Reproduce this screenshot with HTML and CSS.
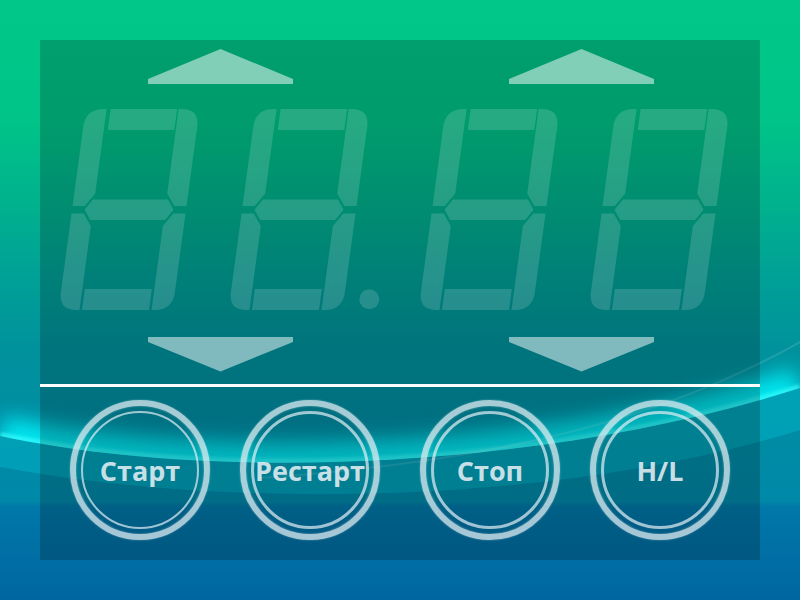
FILE: index.html
```html
<!DOCTYPE html>
<html lang="ru">
<head>
<meta charset="utf-8">
<title>Таймер</title>
<link rel="stylesheet" href="styles.css">
</head>
<body>
<main class="panel">
  <section class="display">
    <div class="arrows arrows-up">
      <span class="arrow up"></span>
      <span class="arrow up"></span>
    </div>
    <svg class="digits" viewBox="0 0 720 220" xmlns="http://www.w3.org/2000/svg">
      <defs>
        <g id="digit">
          <path d="M25,0H91.5V21H25Z"/>
          <path d="M114,97V18Q114,0 96,0H93V84.5L101.8,97Z"/>
          <path d="M114,104.5H101.8L93,117V201H96Q114,201 114,183Z"/>
          <path d="M23.5,180H90.5V201H23.5Z"/>
          <path d="M0,104.5H12.2L21,117V201H18Q0,201 0,183Z"/>
          <path d="M0,97V18Q0,0 18,0H21V84.5L12.2,97Z"/>
          <path d="M12.5,100.75L19.5,90.5H94.5L101.5,100.75L94.5,111H19.5Z"/>
        </g>
      </defs>
      <g class="segments">
        <use href="#digit" transform="translate(18.5 9) matrix(1 0 -0.135 1 27.135 0)"/>
        <use href="#digit" transform="translate(188.5 9) matrix(1 0 -0.135 1 27.135 0)"/>
        <circle cx="329.3" cy="199.3" r="10"/>
        <use href="#digit" transform="translate(378.5 9) matrix(1 0 -0.135 1 27.135 0)"/>
        <use href="#digit" transform="translate(548.5 9) matrix(1 0 -0.135 1 27.135 0)"/>
      </g>
    </svg>
    <div class="arrows arrows-down">
      <span class="arrow down"></span>
      <span class="arrow down"></span>
    </div>
  </section>
  <hr class="divider">
  <section class="controls">
    <div class="pair">
      <button class="btn"><span class="ring ring-thin">Старт</span></button>
      <button class="btn"><span class="ring">Рестарт</span></button>
    </div>
    <div class="pair">
      <button class="btn"><span class="ring">Стоп</span></button>
      <button class="btn"><span class="ring">H/L</span></button>
    </div>
  </section>
</main>
</body>
</html>
```
FILE: styles.css
```css
html, body {
  margin: 0;
}

body {
  width: 800px;
  height: 600px;
  padding: 40px;
  box-sizing: border-box;
  overflow: hidden;
  font-family: "Open Sans", "Noto Sans", sans-serif;
  background: #0090a0 no-repeat 0 0 / 800px 600px url("data:image/svg+xml,%3Csvg xmlns='http://www.w3.org/2000/svg' width='800' height='600' viewBox='0 0 800 600'%3E%3Cdefs%3E%3ClinearGradient id='g' x1='0' y1='0' x2='0' y2='1'%3E%3Cstop offset='0' stop-color='%2300c888'/%3E%3Cstop offset='0.2' stop-color='%2300c488'/%3E%3Cstop offset='0.35' stop-color='%2300b08e'/%3E%3Cstop offset='0.45' stop-color='%2300a296'/%3E%3Cstop offset='0.58' stop-color='%2300929c'/%3E%3Cstop offset='0.72' stop-color='%23008ca4'/%3E%3Cstop offset='0.835' stop-color='%230088a8'/%3E%3Cstop offset='0.845' stop-color='%230078a8'/%3E%3Cstop offset='1' stop-color='%230066a0'/%3E%3C/linearGradient%3E%3CclipPath id='c'%3E%3Cpath d='M0,0H800V388C560,465 230,485 0,436Z'/%3E%3C/clipPath%3E%3Cfilter id='b' filterUnits='userSpaceOnUse' x='0' y='200' width='800' height='400'%3E%3CfeGaussianBlur stdDeviation='10'/%3E%3C/filter%3E%3Cfilter id='s' filterUnits='userSpaceOnUse' x='0' y='200' width='800' height='400'%3E%3CfeGaussianBlur stdDeviation='1.5'/%3E%3C/filter%3E%3C/defs%3E%3Crect width='800' height='600' fill='url(%23g)'/%3E%3Cpath d='M0,436C230,485 560,465 800,388L800,430C560,505 230,510 0,467Z' fill='%2300b4c8' opacity='0.5'/%3E%3Cg clip-path='url(%23c)'%3E%3Cpath d='M0,436C230,485 560,465 800,388' fill='none' stroke='%2300f0f8' stroke-width='40' filter='url(%23b)' opacity='0.9'/%3E%3Cpath d='M0,436C230,485 560,465 800,388' fill='none' stroke='%2340ffff' stroke-width='8' filter='url(%23s)' opacity='0.6'/%3E%3C/g%3E%3Cpath d='M260,478C520,460 680,410 800,342' fill='none' stroke='%23ffffff' stroke-opacity='0.12' stroke-width='2'/%3E%3C/svg%3E");
}

.panel {
  width: 720px;
  height: 520px;
  background: rgba(0, 0, 0, 0.2);
  display: flex;
  flex-direction: column;
}

.display {
  height: 344px;
  display: flex;
  flex-direction: column;
}

.arrows {
  display: flex;
  gap: 216px;
  padding-left: 108px;
}

.arrows-up {
  padding-top: 9px;
}

.arrows-down {
  margin-top: 16.5px;
}

.arrow {
  display: block;
  width: 145px;
  height: 35px;
  background: rgba(255, 255, 255, 0.5);
}

.up {
  clip-path: polygon(0 30px, 50% 0, 100% 30px, 100% 100%, 0 100%);
}

.down {
  clip-path: polygon(0 0, 100% 0, 100% 5.5px, 50% 100%, 0 5.5px);
}

.digits {
  display: block;
  margin-top: 16px;
  width: 720px;
  height: 220px;
}

.segments {
  fill: #ffffff;
  fill-opacity: 0.15;
}

.divider {
  margin: 0;
  border: 0;
  height: 3px;
  background: #ffffff;
}

.controls {
  display: flex;
  gap: 40px;
  padding: 13px 0 0 30px;
}

.pair {
  display: flex;
  gap: 30px;
}

.btn {
  width: 140px;
  height: 140px;
  box-sizing: border-box;
  padding: 0;
  margin: 0;
  border-radius: 50%;
  border: 6px solid rgba(222, 236, 242, 0.75);
  background: none;
  display: flex;
  align-items: center;
  justify-content: center;
  box-shadow: 0 0 2px rgba(255, 255, 255, 0.4), inset 0 0 2px rgba(255, 255, 255, 0.4);
  cursor: pointer;
}

.ring {
  width: 118px;
  height: 118px;
  box-sizing: border-box;
  border-radius: 50%;
  border: 3px solid rgba(222, 236, 242, 0.72);
  display: flex;
  align-items: center;
  justify-content: center;
  font-family: "Open Sans", "Noto Sans", sans-serif;
  font-weight: 700;
  font-size: 27px;
  line-height: 1;
  color: rgba(236, 243, 247, 0.85);
}

.ring-thin {
  border-width: 2px;
}
```
